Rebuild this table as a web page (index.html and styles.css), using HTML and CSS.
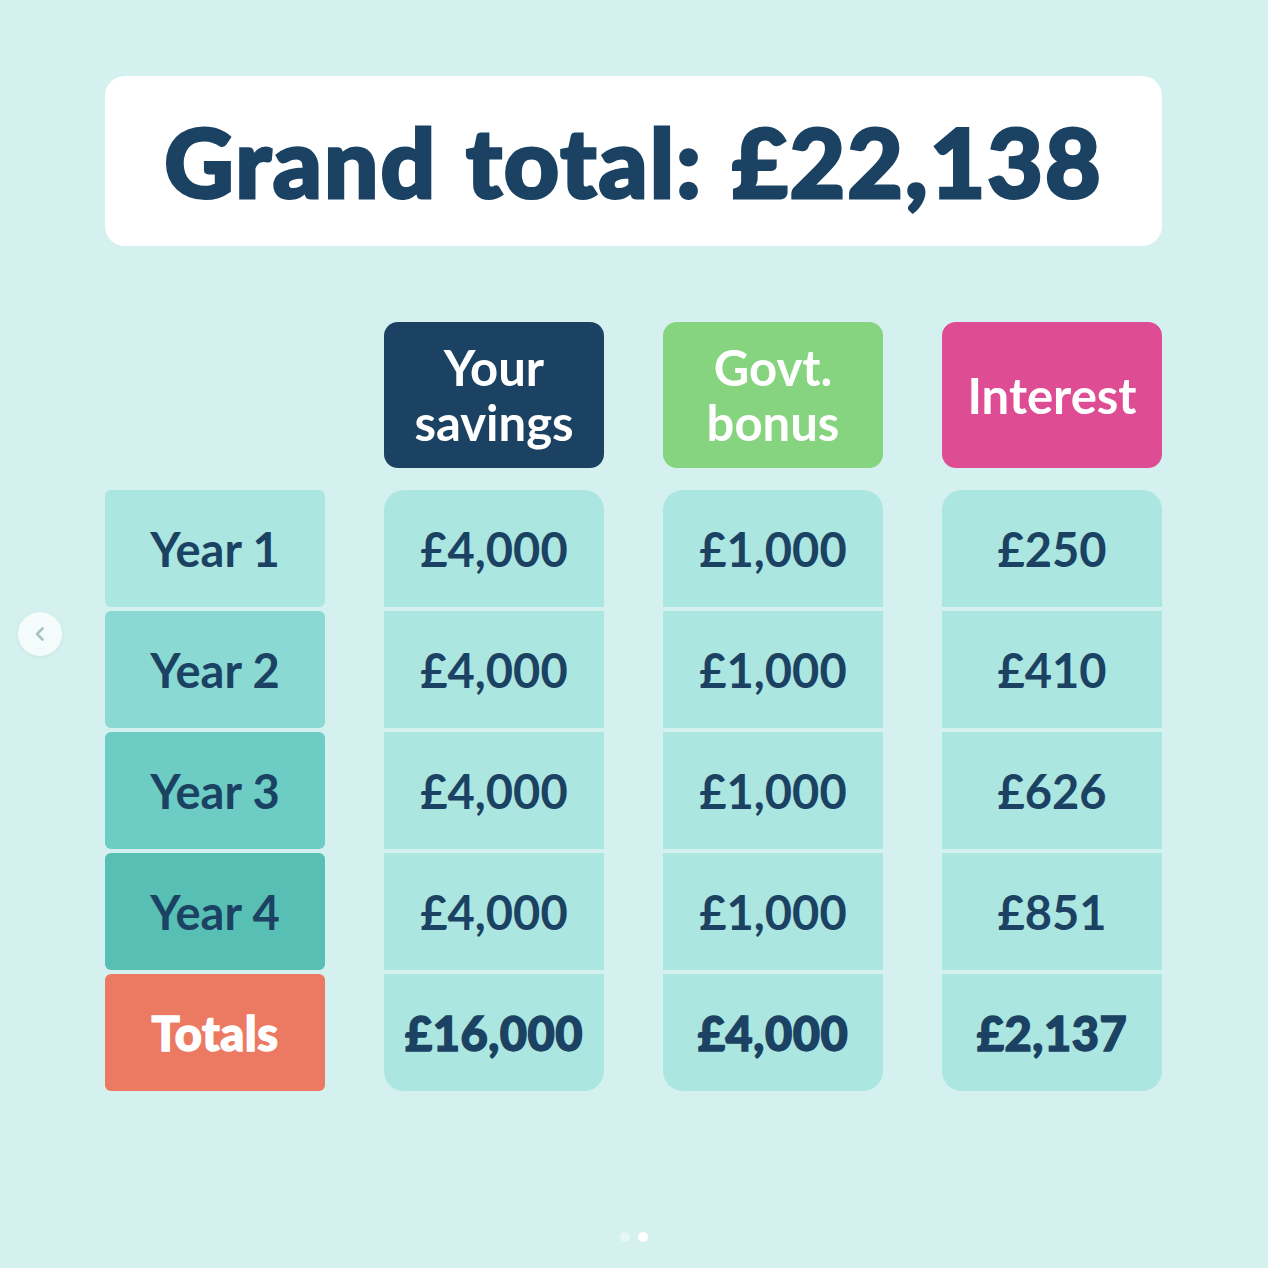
FILE: index.html
```html
<!DOCTYPE html>
<html>
<head>
<meta charset="utf-8">
<link rel="stylesheet" href="styles.css">
</head>
<body>
<main class="slide">
  <div class="title-card"><h1 class="title">Grand total: £22,138</h1></div>
  <div class="table">
    <div class="corner"></div>
    <div class="head head-savings">Your<br>savings</div>
    <div class="head head-bonus">Govt.<br>bonus</div>
    <div class="head head-interest">Interest</div>

    <div class="labels">
      <div class="label y1">Year 1</div>
      <div class="label y2">Year 2</div>
      <div class="label y3">Year 3</div>
      <div class="label y4">Year 4</div>
      <div class="label totals">Totals</div>
    </div>
    <div class="col">
      <div class="cell">£4,000</div>
      <div class="cell">£4,000</div>
      <div class="cell">£4,000</div>
      <div class="cell">£4,000</div>
      <div class="cell total">£16,000</div>
    </div>
    <div class="col">
      <div class="cell">£1,000</div>
      <div class="cell">£1,000</div>
      <div class="cell">£1,000</div>
      <div class="cell">£1,000</div>
      <div class="cell total">£4,000</div>
    </div>
    <div class="col">
      <div class="cell">£250</div>
      <div class="cell">£410</div>
      <div class="cell">£626</div>
      <div class="cell">£851</div>
      <div class="cell total">£2,137</div>
    </div>
  </div>
</main>
<button class="nav-prev" aria-label="Previous">
  <svg width="20" height="20" viewBox="0 0 20 20"><path d="M12.5 4.5 L7 10 L12.5 15.5" fill="none" stroke="#a8c2c2" stroke-width="2.6" stroke-linecap="round" stroke-linejoin="round"/></svg>
</button>
<div class="dots"><span class="dot"></span><span class="dot active"></span></div>
</body>
</html>
```
FILE: styles.css
```css
html, body {
  margin: 0;
  padding: 0;
}
body {
  width: 1268px;
  height: 1268px;
  background: #d4f1ef;
  font-family: "Lato", "Inter", sans-serif;
  color: #1b4262;
  position: relative;
  overflow: hidden;
}
.slide {
  padding: 76px 106px 0 105px;
  display: flex;
  flex-direction: column;
  gap: 76px;
}
.title-card {
  background: #ffffff;
  border-radius: 20px;
  height: 170px;
  display: flex;
  align-items: center;
  justify-content: center;
}
.title {
  margin: 0;
  font-size: 96px;
  font-weight: 900;
  color: #1b4262;
  line-height: 1;
  letter-spacing: 2px;
  word-spacing: 4px;
  -webkit-text-stroke: 3px #1b4262;
}
.table {
  display: grid;
  grid-template-columns: 220px 220px 220px 220px;
  grid-template-rows: 146px auto;
  justify-content: space-between;
  row-gap: 22px;
}
.head {
  border-radius: 14px;
  color: #ffffff;
  font-size: 49px;
  font-weight: 700;
  line-height: 55px;
  display: flex;
  align-items: center;
  justify-content: center;
  text-align: center;
}
.head-savings { background: #1b4262; }
.head-bonus { background: #86d47f; }
.head-interest { background: #de4d93; }
.labels, .col {
  display: flex;
  flex-direction: column;
  gap: 4px;
}
.col {
  border-radius: 20px;
  overflow: hidden;
}
.label, .cell {
  height: 117px;
  display: flex;
  align-items: center;
  justify-content: center;
  font-size: 47px;
  font-weight: 700;
}
.label {
  border-radius: 6px;
}
.cell {
  background: #ace6e1;
}
.cell.total {
  font-weight: 900;
  letter-spacing: 0.5px;
  -webkit-text-stroke: 1.4px #1b4262;
}
.y1 { background: #ace6e0; }
.y2 { background: #8ad9d3; }
.y3 { background: #6dcdc4; }
.y4 { background: #58bfb4; }
.totals {
  background: #ec7a63;
  color: #ffffff;
  font-weight: 900;
  letter-spacing: 0.5px;
  -webkit-text-stroke: 1.4px #ffffff;
}
.nav-prev {
  position: absolute;
  left: 18px;
  top: 612px;
  width: 44px;
  height: 44px;
  border-radius: 50%;
  border: none;
  padding: 0;
  background: rgba(255, 255, 255, 0.75);
  box-shadow: 0 1px 4px rgba(0, 0, 0, 0.06);
  display: flex;
  align-items: center;
  justify-content: center;
}
.dots {
  position: absolute;
  left: 0;
  right: 0;
  top: 1232px;
  display: flex;
  justify-content: center;
  gap: 8px;
}
.dot {
  width: 10px;
  height: 10px;
  border-radius: 50%;
  background: rgba(255, 255, 255, 0.4);
}
.dot.active {
  background: #ffffff;
}
```
